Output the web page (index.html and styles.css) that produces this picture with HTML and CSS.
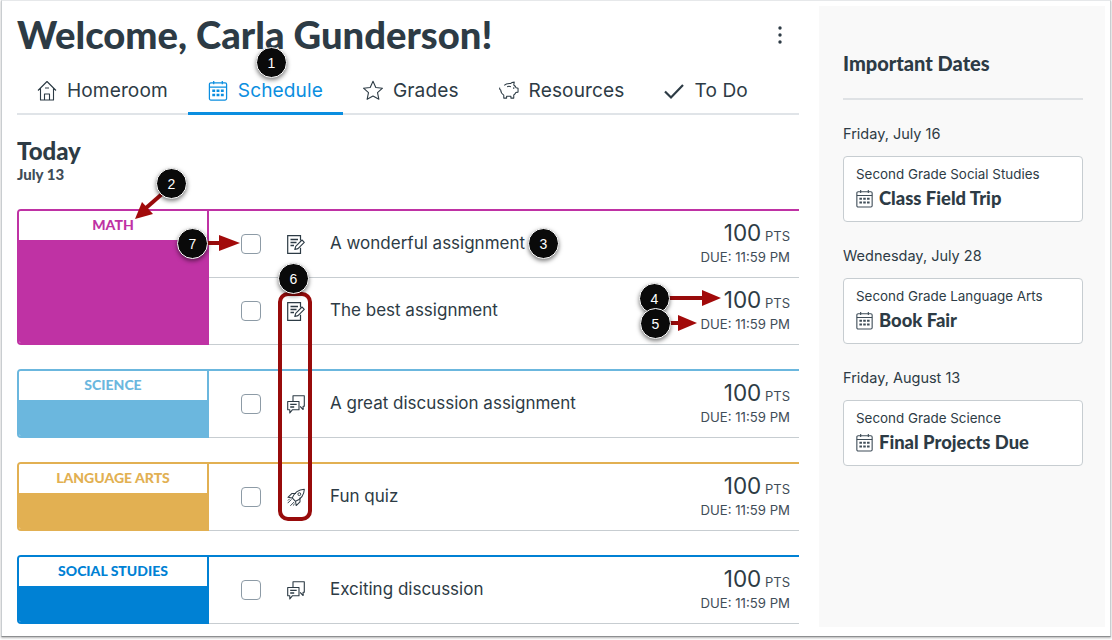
FILE: index.html
```html
<!DOCTYPE html>
<html lang="en">
<head>
    <meta charset="UTF-8">
    <title>Schedule</title>
    <link rel="stylesheet" href="styles.css">
</head>
<body>
    <!-- shared icons -->
    <svg class="icon-defs" width="0" height="0">
        <symbol id="i-calendar" viewBox="0 0 20 22">
            <rect x="1" y="3" width="18" height="18" rx="1.5" fill="none" stroke="currentColor" stroke-width="1.3"/>
            <path d="M1 7.5h18M5.5 1v3.5M14.500 1v3.500" fill="none" stroke="currentColor" stroke-width="1.3"/>
            <path d="M4 10h3v2.500H4zM8.500 10h3v2.500h-3zM13 10h3v2.500h-3zM4 14.500h3V17H4zM8.500 14.500h3V17h-3zM13 14.500h3V17h-3z" fill="currentColor"/>
        </symbol>
        <symbol id="i-assignment" viewBox="0 0 18 19">
            <path d="M13.500 5.500V.7H.7v17.600h12.800v-5.500" fill="none" stroke="currentColor" stroke-width="1.200"/>
            <path d="M3.500 4.500h7.500M3.500 7.500h6M3.500 10.500h3.500" fill="none" stroke="currentColor" stroke-width="1.300"/>
            <path d="M7.800 14.500l.9-3.200L15 5l2.300 2.300-6.300 6.300z" fill="#fff" stroke="currentColor" stroke-width="1.100" stroke-linejoin="round"/>
        </symbol>
        <symbol id="i-discussion" viewBox="0 0 18 19">
            <path d="M6 6V.8h11.300v10.500h-1.200v3.200l-3-3.200" fill="none" stroke="currentColor" stroke-width="1.100" stroke-linejoin="round"/>
            <path d="M.7 6.500h11.300v8.200H5.500l-2.700 3.300v-3.300H.7z" fill="#fff" stroke="currentColor" stroke-width="1.100" stroke-linejoin="round"/>
            <path d="M3.200 9.300h6.500M3.200 12h4" fill="none" stroke="currentColor" stroke-width="1.300"/>
        </symbol>
        <symbol id="i-rocket" viewBox="0 0 19 19">
            <path d="M5.500 10C7.500 5 12 1 18.300.7 18 7 14 11.500 9 13.500z" fill="none" stroke="currentColor" stroke-width="1.100" stroke-linejoin="round"/>
            <path d="M5.500 10L1 9.300 5 5.300h4.500M9 13.500l.7 4.500 4-4V9.500" fill="none" stroke="currentColor" stroke-width="1.100" stroke-linejoin="round"/>
            <path d="M.7 15.500l4-4M3.500 18.300l4-4M1 12.700l1.800-1.800M6.300 18l1.800-1.800" fill="none" stroke="currentColor" stroke-width="1"/>
            <circle cx="13" cy="6" r="1.500" fill="none" stroke="currentColor"/>
        </symbol>
    </svg>

    <div class="window">
        <main class="main">
            <div class="title-row">
                <h1>Welcome, Carla Gunderson!</h1>
                <svg class="kebab" width="4" height="18" viewBox="0 0 4 18"><circle cx="2" cy="2" r="1.700"/><circle cx="2" cy="9" r="1.700"/><circle cx="2" cy="16" r="1.700"/></svg>
            </div>

            <nav class="tabs">
                <div class="tab">
                    <svg class="tab-icon" viewBox="0 0 20 21">
                        <path d="M1 10.500L10 1.500l9 9M3.500 8.500V20h13V8.500M7.500 20v-6h5v6M8 8h4" fill="none" stroke="currentColor" stroke-width="1.100" stroke-linejoin="round"/>
                    </svg>
                    Homeroom
                </div>
                <div class="tab active">
                    <svg class="tab-icon"><use href="#i-calendar"/></svg>
                    Schedule
                </div>
                <div class="tab">
                    <svg class="tab-icon" viewBox="0 0 20 20">
                        <path d="M10 .8l2.800 6.200 6.700.7-5 4.500 1.400 6.600L10 15.500l-5.900 3.300 1.400-6.600-5-4.500 6.700-.7z" fill="none" stroke="currentColor" stroke-width="1.100" stroke-linejoin="round"/>
                    </svg>
                    Grades
                </div>
                <div class="tab">
                    <svg class="tab-icon" viewBox="0 0 21 20">
                        <path d="M5.500 4.500C7 3 9.500 2.500 12 2.700c1-1 2.500-1.500 4-1.500l-.5 3c1.200.8 2 1.800 2.500 3l2 .5v4l-2.300.5c-.5 1-1.200 1.800-2.200 2.500V18h-3v-2H8v2H5v-3.200C3 13.500 1.800 11.500 1.800 9.500 .8 9 .5 8 .8 7" fill="none" stroke="currentColor" stroke-width="1.100" stroke-linejoin="round"/>
                        <path d="M8.500 6c1.300-.5 2.700-.5 4 0" fill="none" stroke="currentColor" stroke-width="1.100"/>
                        <circle cx="15.500" cy="7.500" r=".8" fill="currentColor"/>
                    </svg>
                    Resources
                </div>
                <div class="tab">
                    <svg class="tab-icon" viewBox="0 0 20 20">
                        <path d="M1 11l6 6L19 4.500" fill="none" stroke="currentColor" stroke-width="2.200"/>
                    </svg>
                    To Do
                </div>
            </nav>

            <section class="today">
                <h2>Today</h2>
                <div class="today-date">July 13</div>
            </section>

            <div class="course math">
                <div class="course-tag">
                    <div class="course-name">Math</div>
                    <div class="course-fill"></div>
                </div>
                <div class="course-items">
                    <div class="item">
                        <span class="check"></span>
                        <svg class="type-icon"><use href="#i-assignment"/></svg>
                        <span class="item-title">A wonderful assignment</span>
                        <div class="item-meta">
                            <div class="points"><b>100</b> PTS</div>
                            <div class="due">DUE: 11:59 PM</div>
                        </div>
                    </div>
                    <div class="item">
                        <span class="check"></span>
                        <svg class="type-icon"><use href="#i-assignment"/></svg>
                        <span class="item-title">The best assignment</span>
                        <div class="item-meta">
                            <div class="points"><b>100</b> PTS</div>
                            <div class="due">DUE: 11:59 PM</div>
                        </div>
                    </div>
                </div>
            </div>

            <div class="course science">
                <div class="course-tag">
                    <div class="course-name">Science</div>
                    <div class="course-fill"></div>
                </div>
                <div class="course-items">
                    <div class="item">
                        <span class="check"></span>
                        <svg class="type-icon"><use href="#i-discussion"/></svg>
                        <span class="item-title">A great discussion assignment</span>
                        <div class="item-meta">
                            <div class="points"><b>100</b> PTS</div>
                            <div class="due">DUE: 11:59 PM</div>
                        </div>
                    </div>
                </div>
            </div>

            <div class="course language">
                <div class="course-tag">
                    <div class="course-name">Language Arts</div>
                    <div class="course-fill"></div>
                </div>
                <div class="course-items">
                    <div class="item">
                        <span class="check"></span>
                        <svg class="type-icon"><use href="#i-rocket"/></svg>
                        <span class="item-title">Fun quiz</span>
                        <div class="item-meta">
                            <div class="points"><b>100</b> PTS</div>
                            <div class="due">DUE: 11:59 PM</div>
                        </div>
                    </div>
                </div>
            </div>

            <div class="course social">
                <div class="course-tag">
                    <div class="course-name">Social Studies</div>
                    <div class="course-fill"></div>
                </div>
                <div class="course-items">
                    <div class="item">
                        <span class="check"></span>
                        <svg class="type-icon"><use href="#i-discussion"/></svg>
                        <span class="item-title">Exciting discussion</span>
                        <div class="item-meta">
                            <div class="points"><b>100</b> PTS</div>
                            <div class="due">DUE: 11:59 PM</div>
                        </div>
                    </div>
                </div>
            </div>
        </main>

        <aside class="sidebar">
            <h3>Important Dates</h3>
            <div class="date-group">
                <div class="date-label">Friday, July 16</div>
                <div class="date-card">
                    <div class="date-course">Second Grade Social Studies</div>
                    <div class="date-event"><svg class="event-icon"><use href="#i-calendar"/></svg>Class Field Trip</div>
                </div>
            </div>
            <div class="date-group">
                <div class="date-label">Wednesday, July 28</div>
                <div class="date-card">
                    <div class="date-course">Second Grade Language Arts</div>
                    <div class="date-event"><svg class="event-icon"><use href="#i-calendar"/></svg>Book Fair</div>
                </div>
            </div>
            <div class="date-group">
                <div class="date-label">Friday, August 13</div>
                <div class="date-card">
                    <div class="date-course">Second Grade Science</div>
                    <div class="date-event"><svg class="event-icon"><use href="#i-calendar"/></svg>Final Projects Due</div>
                </div>
            </div>
        </aside>

        <!-- callouts on top of the screenshot -->
        <svg class="arrows" width="1112" height="640" viewBox="0 0 1112 640">
            <rect class="callout-box" x="280" y="294" width="30" height="225" rx="8"/>
            <path class="arrow-line" d="M162 194L146 208"/>
            <path class="arrow-head" d="M135 219l7-17 11 12z"/>
            <path class="arrow-line" d="M206 243h16"/>
            <path class="arrow-head" d="M240 243l-21-8v16z"/>
            <path class="arrow-line" d="M668 298h38"/>
            <path class="arrow-head" d="M721 298l-19-8v16z"/>
            <path class="arrow-line" d="M668 323h14"/>
            <path class="arrow-head" d="M697 323l-19-8v16z"/>
        </svg>
        <span class="marker m1">1</span>
        <span class="marker m2">2</span>
        <span class="marker m3">3</span>
        <span class="marker m4">4</span>
        <span class="marker m5">5</span>
        <span class="marker m6">6</span>
        <span class="marker m7">7</span>
    </div>
</body>
</html>
```

FILE: styles.css
```css
* {
    margin: 0;
    padding: 0;
    box-sizing: border-box;
}

html, body {
    height: 100%;
    overflow: hidden;
}

body {
    background: #fff;
    color: #2d3b45;
    font-family: 'Inter', sans-serif;
}

.icon-defs {
    position: absolute;
}

.window {
    position: relative;
    width: 1110px;
    height: 637px;
    margin-left: 1px;
    display: flex;
    background: #fff;
    border: 1px solid #c9cdd0;
    border-top-color: #e6e8ea;
    border-bottom-color: #8d8f91;
    box-shadow: 0 1px 2px rgba(0, 0, 0, 0.3);
    overflow: hidden;
}

.main {
    width: 782px;
    margin-left: 15px;
    flex-shrink: 0;
}

.title-row {
    height: 71px;
    display: flex;
    justify-content: space-between;
    align-items: flex-start;
}

h1 {
    font-family: 'Lato', sans-serif;
    font-size: 38.200px;
    font-weight: 900;
    line-height: 47px;
    margin-top: 10px;
}

.kebab {
    fill: #2d3b45;
    margin: 25px 17px 0 0;
}

.tabs {
    height: 43px;
    display: flex;
    border-bottom: 2px solid #e0e4e8;
}

.tab {
    display: flex;
    align-items: center;
    gap: 10px;
    height: 41px;
    padding: 0 20px 5px;
    font-size: 19.100px;
    letter-spacing: 0.1px;
    color: #2d3b45;
}

.tab.active {
    color: #0b8ee0;
    border-bottom: 3px solid #0b8ee0;
    height: 43px;
    padding-bottom: 4px;
}

.tab-icon {
    width: 20px;
    height: 21px;
}

.today {
    height: 94px;
    padding-top: 22px;
}

h2 {
    font-family: 'Lato', sans-serif;
    font-size: 24px;
    font-weight: 900;
    line-height: 28px;
}

.today-date {
    font-family: 'Lato', sans-serif;
    font-size: 15px;
    font-weight: 900;
    line-height: 18px;
    color: #3f4d58;
}

.course {
    display: flex;
    margin-bottom: 24px;
}

.course-tag {
    width: 192px;
    flex-shrink: 0;
    display: flex;
    flex-direction: column;
    border: 2px solid var(--course);
    border-radius: 4px 0 0 4px;
    overflow: hidden;
}

.course-name {
    height: 29px;
    text-align: center;
    text-transform: uppercase;
    color: var(--course);
    font-family: 'Lato', sans-serif;
    font-size: 14px;
    font-weight: 900;
    line-height: 28px;
    background: #fff;
}

.course-fill {
    flex: 1;
    background: var(--course);
}

.course-items {
    flex: 1;
    border-top: 2px solid var(--course);
}

.item {
    height: 67px;
    display: flex;
    align-items: center;
    border-bottom: 1px solid #c7cdd1;
}

.check {
    width: 20px;
    height: 20px;
    margin-left: 32px;
    background: #fff;
    border: 1px solid #8d9ba6;
    border-radius: 4px;
}

.type-icon {
    width: 18px;
    height: 19px;
    margin-left: 26px;
    color: #2d3b45;
}

.item-title {
    margin-left: 25px;
    padding-bottom: 2px;
    font-size: 17px;
}

.item-meta {
    margin-left: auto;
    margin-right: 9px;
    padding-bottom: 3px;
    text-align: right;
}

.points {
    font-size: 13px;
    line-height: 25px;
    color: #3f4d58;
}

.points b {
    font-size: 22.500px;
    font-weight: 400;
    color: #2d3b45;
}

.due {
    font-size: 13.200px;
    line-height: 16px;
    color: #3f4d58;
}

.math { --course: #bf32a4; }
.science { --course: #6bb7de; }
.language { --course: #e2b052; }
.social { --course: #0081d4; }

.sidebar {
    width: 286px;
    height: 621px;
    margin: 5px 0 0 20px;
    padding: 0 22px 0 24px;
    background: #f9f9f9;
}

h3 {
    font-family: 'Lato', sans-serif;
    font-size: 20px;
    font-weight: 900;
    line-height: 24px;
    padding: 45px 0 24px;
    height: 94px;
    border-bottom: 2px solid #dfe2e5;
}

.date-group {
    margin-top: 25px;
    margin-bottom: 25px;
}

.date-label {
    font-size: 14.500px;
    line-height: 18px;
    margin-bottom: 13px;
}

.date-card {
    height: 66px;
    padding: 8px 12px;
    background: #fff;
    border: 1px solid #c7cdd1;
    border-radius: 4px;
}

.date-course {
    font-size: 13.400px;
    line-height: 18px;
}

.date-event {
    display: flex;
    align-items: center;
    gap: 6px;
    margin-top: 4px;
    font-family: 'Lato', sans-serif;
    font-size: 18.400px;
    font-weight: 900;
    line-height: 22px;
}

.event-icon {
    width: 17px;
    height: 19px;
    color: #3f4d58;
}

/* callouts */
.arrows {
    position: absolute;
    left: -2px;
    top: -1px;
    pointer-events: none;
}

.callout-box {
    fill: none;
    stroke: #980b0b;
    stroke-width: 4;
}

.arrow-line {
    fill: none;
    stroke: #980b0b;
    stroke-width: 4;
}

.arrow-head {
    fill: #a20a0a;
}

.marker {
    position: absolute;
    width: 31px;
    height: 31px;
    display: flex;
    align-items: center;
    justify-content: center;
    background: #0a0a0a;
    color: #fff;
    border: 1px solid #fff;
    border-radius: 50%;
    box-shadow: 0 2px 4px rgba(0, 0, 0, 0.5);
    font-family: 'Liberation Sans', sans-serif;
    font-size: 14px;
}

.m1 { left: 254px; top: 46px; }
.m2 { left: 154px; top: 167px; }
.m3 { left: 526px; top: 227px; }
.m4 { left: 637px; top: 282px; }
.m5 { left: 638px; top: 307px; }
.m6 { left: 276px; top: 262px; }
.m7 { left: 175px; top: 227px; }
```
